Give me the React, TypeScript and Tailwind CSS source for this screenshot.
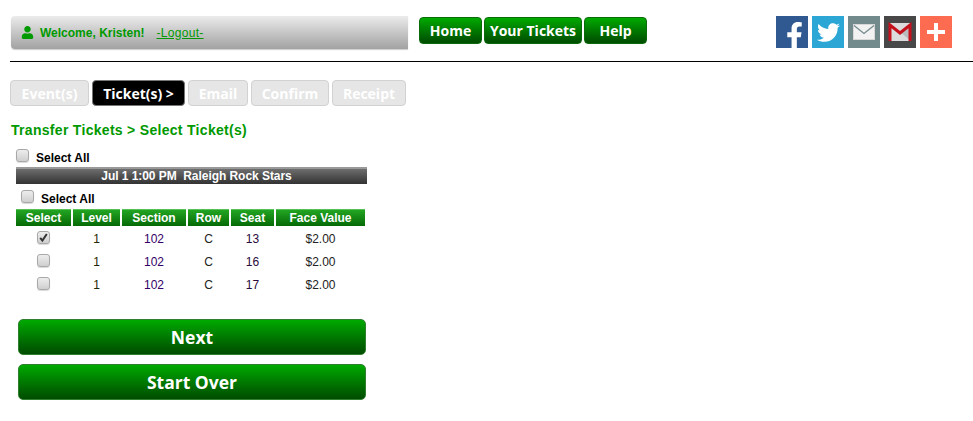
import React from 'react';
import { FaFacebookF, FaTwitter, FaUser } from 'react-icons/fa';

const Checkbox = ({ checked = false }: { checked?: boolean }) => (
  <span className="relative inline-flex h-[13px] w-[13px] shrink-0">
    <input
      type="checkbox"
      defaultChecked={checked}
      className="m-0 h-[13px] w-[13px] appearance-none rounded-[3px] border border-[#a8a8a8] bg-gradient-to-b from-[#ededed] to-[#cfcfcf] shadow-[0_1px_1px_rgba(0,0,0,0.15)]"
    />
    {checked && (
      <svg viewBox="0 0 13 13" className="pointer-events-none absolute inset-0 h-[13px] w-[13px]">
        <path d="M3.2 6.8 5.4 9.6 9.8 3" fill="none" stroke="#333" strokeWidth="2" />
      </svg>
    )}
  </span>
);

const NavButton = ({ label, width }: { label: string; width: string }) => (
  <a className={`flex h-[27px] ${width} items-center justify-center rounded-[4px] border border-[#0b6b0b] bg-gradient-to-b from-[#00aa00] to-[#004c00] font-['Open_Sans',sans-serif] text-[14px] font-bold text-white`}>
    {label}
  </a>
);

const Step = ({ label, width, active = false }: { label: string; width: string; active?: boolean }) => (
  <div
    className={`flex h-[26px] ${width} items-center justify-center rounded-[4px] border font-['Open_Sans',sans-serif] text-[14px] font-bold ${
      active ? 'border-[#777] bg-black text-white' : 'border-[#d2d2d2] bg-[#e6e6e6] text-white'
    }`}
  >
    {label}
  </div>
);

const columns = ['Select', 'Level', 'Section', 'Row', 'Seat', 'Face Value'];
const tickets = [
  { seat: '13', checked: true },
  { seat: '16', checked: false },
  { seat: '17', checked: false },
];
const gridCols = 'grid grid-cols-[55px_47px_64px_41px_43px_89px] gap-x-[2px]';

const BigButton = ({ label }: { label: string }) => (
  <button className="flex h-[36px] w-[348px] items-center justify-center rounded-[5px] border border-[#2f7f2f] bg-gradient-to-b from-[#00aa00] to-[#004c00] font-['Open_Sans',sans-serif] text-[17.5px] font-bold text-white">
    {label}
  </button>
);

export default function App() {
  return (
    <div className="h-[421px] w-[973px] overflow-hidden bg-white font-['Liberation_Sans',Arial,sans-serif]">
      {/* Top header */}
      <div className="ml-[10px] flex h-[62px] border-b border-black pt-[16px]">
        <div className="ml-[1px] flex h-[33px] w-[397px] items-center rounded-l-[4px] bg-gradient-to-b from-[#ececec] to-[#a2a2a2] pl-[10px] text-[12px] font-bold text-[#009900] shadow-[0_1px_1px_rgba(0,0,0,0.2)]">
          <FaUser size={13} className="mr-[6px]" />
          <span>Welcome, Kristen!</span>
          <a className="ml-[12px] font-normal tracking-[0.3px] underline">-Logout-</a>
        </div>
        <div className="ml-[11px] mt-[1px] flex gap-[2px]">
          <NavButton label="Home" width="w-[63px]" />
          <NavButton label="Your Tickets" width="w-[98px]" />
          <NavButton label="Help" width="w-[63px]" />
        </div>
        <div className="ml-[129px] flex gap-[4px]">
          <div className="relative flex h-[32px] w-[32px] items-end justify-center overflow-hidden bg-[#305891] text-white">
            <FaFacebookF size={27} className="translate-x-[2px] translate-y-[1px]" />
          </div>
          <div className="flex h-[32px] w-[32px] items-center justify-center bg-[#2ca7d5] text-white">
            <FaTwitter size={23} />
          </div>
          <div className="flex h-[32px] w-[32px] items-center justify-center bg-[#738a8d]">
            <svg viewBox="0 0 22 16" className="h-[16px] w-[22px]">
              <rect x="0.5" y="0.5" width="21" height="15" fill="#f2f2f2" stroke="#d8d8d8" />
              <path d="M1 1.5 11 9.5 21 1.5" fill="none" stroke="#738a8d" strokeWidth="1.3" />
            </svg>
          </div>
          <div className="flex h-[32px] w-[32px] items-center justify-center bg-[#484848]">
            <svg viewBox="0 0 24 20" className="h-[20px] w-[24px]">
              <rect x="1" y="1" width="22" height="18" fill="#dcdcdc" />
              <path d="M23 19 12 10 23 2Z" fill="#b9bdbd" />
              <path d="M2 19V3L12 11 22 3V19" fill="none" stroke="#c5111c" strokeWidth="3" />
            </svg>
          </div>
          <div className="flex h-[32px] w-[32px] items-center justify-center bg-[#fd6c50]">
            <svg viewBox="0 0 18 18" className="h-[18px] w-[18px]">
              <path d="M7 0h4v7h7v4h-7v7H7v-7H0V7h7Z" fill="#fff" />
            </svg>
          </div>
        </div>
      </div>

      {/* Steps */}
      <div className="ml-[10px] mt-[18px] flex gap-[3px]">
        <Step label="Event(s)" width="w-[79px]" />
        <Step label="Ticket(s) >" width="w-[93px]" active />
        <Step label="Email" width="w-[60px]" />
        <Step label="Confirm" width="w-[78px]" />
        <Step label="Receipt" width="w-[74px]" />
      </div>

      <h1 className="ml-[11px] mt-[16px] text-[14px] font-bold leading-[16px] tracking-[0.3px] text-[#009900]">
        Transfer Tickets &gt; Select Ticket(s)
      </h1>

      {/* Ticket selection */}
      <div className="ml-[16px] mt-[11px] w-[351px]">
        <label className="flex h-[18px] items-start gap-[7px] text-[12px] font-bold leading-[14px] text-black">
          <Checkbox />
          <span className="mt-[2px]">Select All</span>
        </label>
        <div className="h-[17px] border-t-2 border-[#999] bg-gradient-to-b from-[#6e6e6e] to-[#333] pl-[10px] text-center text-[12px] font-bold leading-[15px] tracking-[-0.05px] text-white">
          Jul 1 1:00 PM&nbsp;&nbsp;Raleigh Rock Stars
        </div>
        <label className="ml-[5px] mt-[5px] flex h-[18px] items-start gap-[7px] text-[12px] font-bold leading-[14px] text-black">
          <span className="mt-[1px] flex">
            <Checkbox />
          </span>
          <span className="mt-[3px]">Select All</span>
        </label>
        <div className={`${gridCols} mt-[2px] h-[17px]`}>
          {columns.map((col) => (
            <div
              key={col}
              className="border-t border-[#57c057] bg-gradient-to-b from-[#22a522] to-[#056a05] text-center text-[12px] font-bold leading-[16px] text-white"
            >
              {col}
            </div>
          ))}
        </div>
        {tickets.map((t) => (
          <div key={t.seat} className={`${gridCols} h-[23px] items-center text-center text-[12px]`}>
            <div className="flex justify-center">
              <Checkbox checked={t.checked} />
            </div>
            <div className="pt-[2px] text-[#1c2600]">1</div>
            <div className="pt-[2px] text-[#330066]">102</div>
            <div className="pt-[2px] text-[#222]">C</div>
            <div className="pt-[2px] text-[#2a0a3a]">{t.seat}</div>
            <div className="pt-[2px] text-[#222]">$2.00</div>
          </div>
        ))}
      </div>

      {/* Actions */}
      <div className="ml-[18px] mt-[24px] flex flex-col gap-[9px]">
        <BigButton label="Next" />
        <BigButton label="Start Over" />
      </div>
    </div>
  );
}
